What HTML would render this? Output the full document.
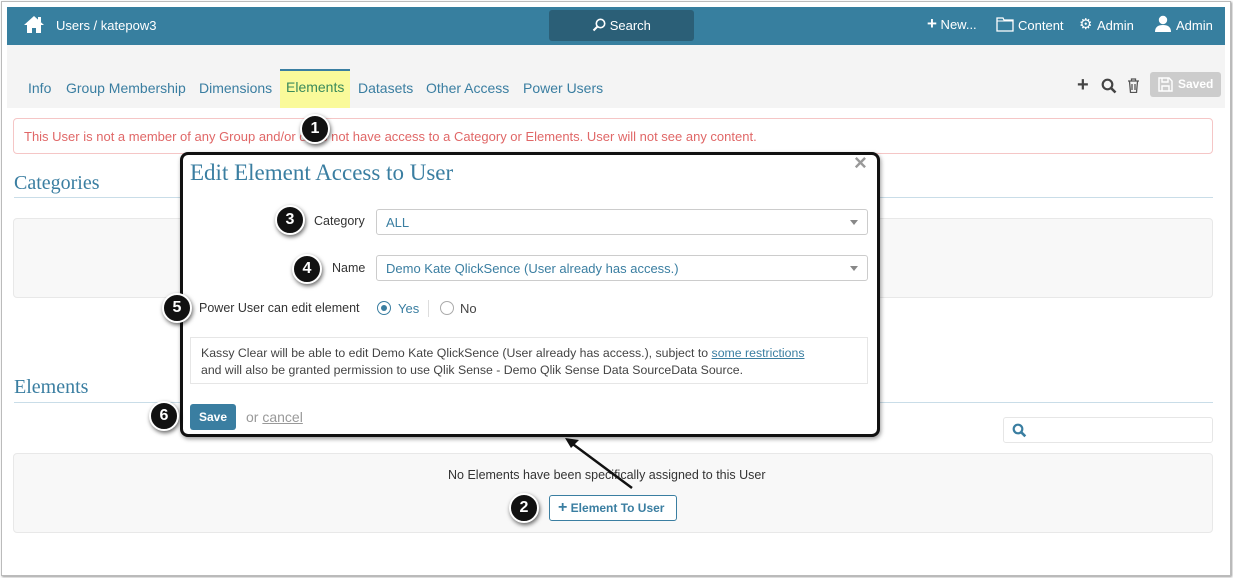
<!DOCTYPE html>
<html><head><meta charset="utf-8"><style>
*{box-sizing:border-box;margin:0;padding:0}
body{width:1233px;height:578px;background:#fff;font-family:"Liberation Sans",sans-serif;position:relative;overflow:hidden}
.abs{position:absolute}
.frame{left:1px;top:1px;width:1230px;height:575px;border:1px solid #bbb;box-shadow:1px 1px 2px #999;background:#fff}
.nav{left:7px;top:7px;width:1218px;height:38px;background:#377f9f;color:#fff;font-size:13px}
.sub{left:7px;top:45px;width:1218px;height:63px;background:#f4f4f4}
.tab{top:80px;font-size:14px;color:#3a7ea1}
.circle{width:30px;height:30px;border-radius:50%;background:#111;border:2px solid #fff;box-shadow:1px 2px 4px rgba(0,0,0,.6);color:#fff;font-weight:bold;font-size:16px;text-align:center;line-height:26px}
.h2{font-family:"Liberation Serif",serif;font-size:20px;color:#3a7ea1}
.line{height:1px;background:#c9dde8}
.panel{border:1px solid #e8e8e8;border-radius:4px;background:#f8f8f8}
.sel{left:376px;width:492px;height:26px;border:1px solid #ccc;border-radius:3px;color:#3a7ea1;font-size:13px;padding:5px 9px}
.sel:after{content:"";position:absolute;right:9px;top:10px;border:4px solid transparent;border-top:5px solid #888}
</style></head><body>
<div class="abs frame"></div>
<div class="abs nav">
  <svg class="abs" style="left:16px;top:8px" width="22" height="19" viewBox="0 0 22 19"><path d="M11 1L1 10h3v8h5v-5h4v5h5v-8h3z" fill="#fff"/><rect x="15" y="2" width="3" height="5" fill="#fff"/></svg>
  <div class="abs" style="left:49px;top:11px">Users / katepow3</div>
  <div class="abs" style="left:542px;top:3px;width:145px;height:31px;background:#2b5f77;border-radius:3px;text-align:center;line-height:31px">
    <svg width="14" height="14" viewBox="0 0 14 14" style="vertical-align:-2px"><circle cx="8.5" cy="5.5" r="4.2" stroke="#fff" stroke-width="1.6" fill="none"/><path d="M5.5 8.5L1.5 12.5" stroke="#fff" stroke-width="2"/></svg> Search</div>
  <div class="abs" style="left:920px;top:10px"><b style="font-size:17px;line-height:14px">+</b> New...</div>
  <svg class="abs" style="left:989px;top:10px" width="18" height="15" viewBox="0 0 18 15"><path d="M1 1h6l1 2h9v11H1z" stroke="#fff" stroke-width="1.3" fill="none"/><path d="M1 4h16" stroke="#fff"/></svg>
  <div class="abs" style="left:1011px;top:11px">Content</div>
  <div class="abs" style="left:1072px;top:8px;font-size:15px">⚙</div>
  <div class="abs" style="left:1090px;top:11px">Admin</div>
  <svg class="abs" style="left:1148px;top:8px" width="16" height="17" viewBox="0 0 16 17"><circle cx="8" cy="5" r="4.2" fill="#fff"/><path d="M0 17c0-5 3-7 8-7s8 2 8 7z" fill="#fff"/></svg>
  <div class="abs" style="left:1169px;top:11px">Admin</div>
</div>
<div class="abs sub"></div>
<div class="abs" style="left:280px;top:69px;width:70px;height:39px;background:#fafa9a;border-top:2px solid #3a7ea1"></div>
<div class="abs tab" style="left:28px">Info</div>
<div class="abs tab" style="left:66px">Group Membership</div>
<div class="abs tab" style="left:199px">Dimensions</div>
<div class="abs tab" style="left:286px;top:79px;color:#3a8a5a">Elements</div>
<div class="abs tab" style="left:358px">Datasets</div>
<div class="abs tab" style="left:426px">Other Access</div>
<div class="abs tab" style="left:523px">Power Users</div>
<div class="abs" style="left:1077px;top:74px;font-size:20px;font-weight:bold;color:#444">+</div>
<svg class="abs" style="left:1101px;top:78px" width="16" height="16" viewBox="0 0 16 16"><circle cx="6.5" cy="6.5" r="4.8" stroke="#444" stroke-width="2.2" fill="none"/><path d="M10 10l4.5 4.5" stroke="#444" stroke-width="2.6"/></svg>
<svg class="abs" style="left:1127px;top:78px" width="13" height="15" viewBox="0 0 13 15"><path d="M1 3h11M4.5 3V1h4v2M2.5 3.5l1 11h6l1-11M5 6v6M8 6v6" stroke="#555" stroke-width="1.3" fill="none"/></svg>
<div class="abs" style="left:1150px;top:72px;width:71px;height:25px;background:#ccc;border-radius:3px;color:#fff;font-weight:bold;font-size:12px;line-height:25px;padding-left:28px">Saved</div>
<svg class="abs" style="left:1158px;top:77px" width="15" height="15" viewBox="0 0 15 15"><path d="M1 1h10l3 3v10H1z M4 1v4h6V1 M4 14V9h7v5" stroke="#fff" stroke-width="1.4" fill="none"/></svg>

<div class="abs" style="left:13px;top:118px;width:1200px;height:36px;border:1px solid #f5c6c6;border-radius:4px;color:#e06767;font-size:13px;padding:10px 10px">This User is not a member of any Group and/or does not have access to a Category or Elements. User will not see any content.</div>

<div class="abs h2" style="left:14px;top:172px">Categories</div>
<div class="abs line" style="left:14px;top:197px;width:1199px"></div>
<div class="abs panel" style="left:13px;top:218px;width:1200px;height:80px"></div>
<div class="abs h2" style="left:14px;top:376px">Elements</div>
<div class="abs line" style="left:14px;top:402px;width:1199px"></div>
<div class="abs" style="left:1003px;top:417px;width:210px;height:26px;border:1px solid #e6e6e6;border-radius:3px"></div>
<svg class="abs" style="left:1012px;top:423px" width="15" height="15" viewBox="0 0 15 15"><circle cx="6" cy="6" r="4.3" stroke="#3a7ea1" stroke-width="2.2" fill="none"/><path d="M9.3 9.3l4 4" stroke="#3a7ea1" stroke-width="2.6"/></svg>
<div class="abs panel" style="left:13px;top:453px;width:1200px;height:80px"></div>
<div class="abs" style="left:448px;top:468px;font-size:12.5px;color:#333">No Elements have been specifically assigned to this User</div>
<div class="abs" style="left:549px;top:495px;width:128px;height:26px;border:1px solid #3a7ea1;border-radius:3px;color:#3a7ea1;font-weight:bold;font-size:12px;line-height:24px;padding-left:8px;background:#fff"><span style="font-size:16px">+</span> Element To User</div>

<div class="abs" style="left:180px;top:152px;width:700px;height:285px;border:3px solid #111;border-radius:8px;background:#fff;box-shadow:1px 2px 4px rgba(0,0,0,.4)"></div>
<div class="abs" style="left:190px;top:160px;font-family:'Liberation Serif',serif;font-size:23px;color:#3a7ea1">Edit Element Access to User</div>
<div class="abs" style="left:854px;top:150px;font-size:22px;color:#999;font-weight:bold">×</div>
<div class="abs" style="left:314px;top:214px;font-size:12.5px;color:#333">Category</div>
<div class="abs sel" style="top:209px">ALL</div>
<div class="abs" style="left:332px;top:261px;font-size:12.5px;color:#333">Name</div>
<div class="abs sel" style="top:255px">Demo Kate QlickSence (User already has access.)</div>
<div class="abs" style="left:199px;top:301px;font-size:12.5px;color:#333">Power User can edit element</div>
<div class="abs" style="left:377px;top:301px;width:14px;height:14px;border:1px solid #3a7ea1;border-radius:50%"><div style="margin:3px;width:6px;height:6px;border-radius:50%;background:#3a7ea1"></div></div>
<div class="abs" style="left:398px;top:301px;font-size:13px;color:#3a7ea1">Yes</div>
<div class="abs" style="left:428px;top:300px;width:1px;height:17px;background:#ddd"></div>
<div class="abs" style="left:440px;top:301px;width:14px;height:14px;border:1px solid #aaa;border-radius:50%"></div>
<div class="abs" style="left:460px;top:301px;font-size:13px;color:#444">No</div>
<div class="abs" style="left:190px;top:337px;width:678px;height:47px;border:1px solid #e6e6e6;font-size:12.3px;color:#444;padding:7px 10px;line-height:17px">Kassy Clear will be able to edit Demo Kate QlickSence (User already has access.), subject to <u style="color:#3a7ea1">some restrictions</u><br>and will also be granted permission to use Qlik Sense - Demo Qlik Sense Data SourceData Source.</div>
<div class="abs" style="left:190px;top:404px;width:46px;height:26px;background:#3a7ea1;border-radius:3px;color:#fff;font-weight:bold;font-size:12px;text-align:center;line-height:26px">Save</div>
<div class="abs" style="left:246px;top:409px;font-size:14px;color:#999">or <u>cancel</u></div>

<svg class="abs" style="left:0;top:0" width="1233" height="578"><path d="M632 488L570 442" stroke="#111" stroke-width="2.5"/><path d="M565 438l14 2-8 8z" fill="#111"/></svg>

<div class="abs circle" style="left:300px;top:114px">1</div>
<div class="abs circle" style="left:509px;top:493px">2</div>
<div class="abs circle" style="left:275px;top:205px">3</div>
<div class="abs circle" style="left:292px;top:254px">4</div>
<div class="abs circle" style="left:162px;top:293px">5</div>
<div class="abs circle" style="left:149px;top:401px">6</div>
</body></html>
